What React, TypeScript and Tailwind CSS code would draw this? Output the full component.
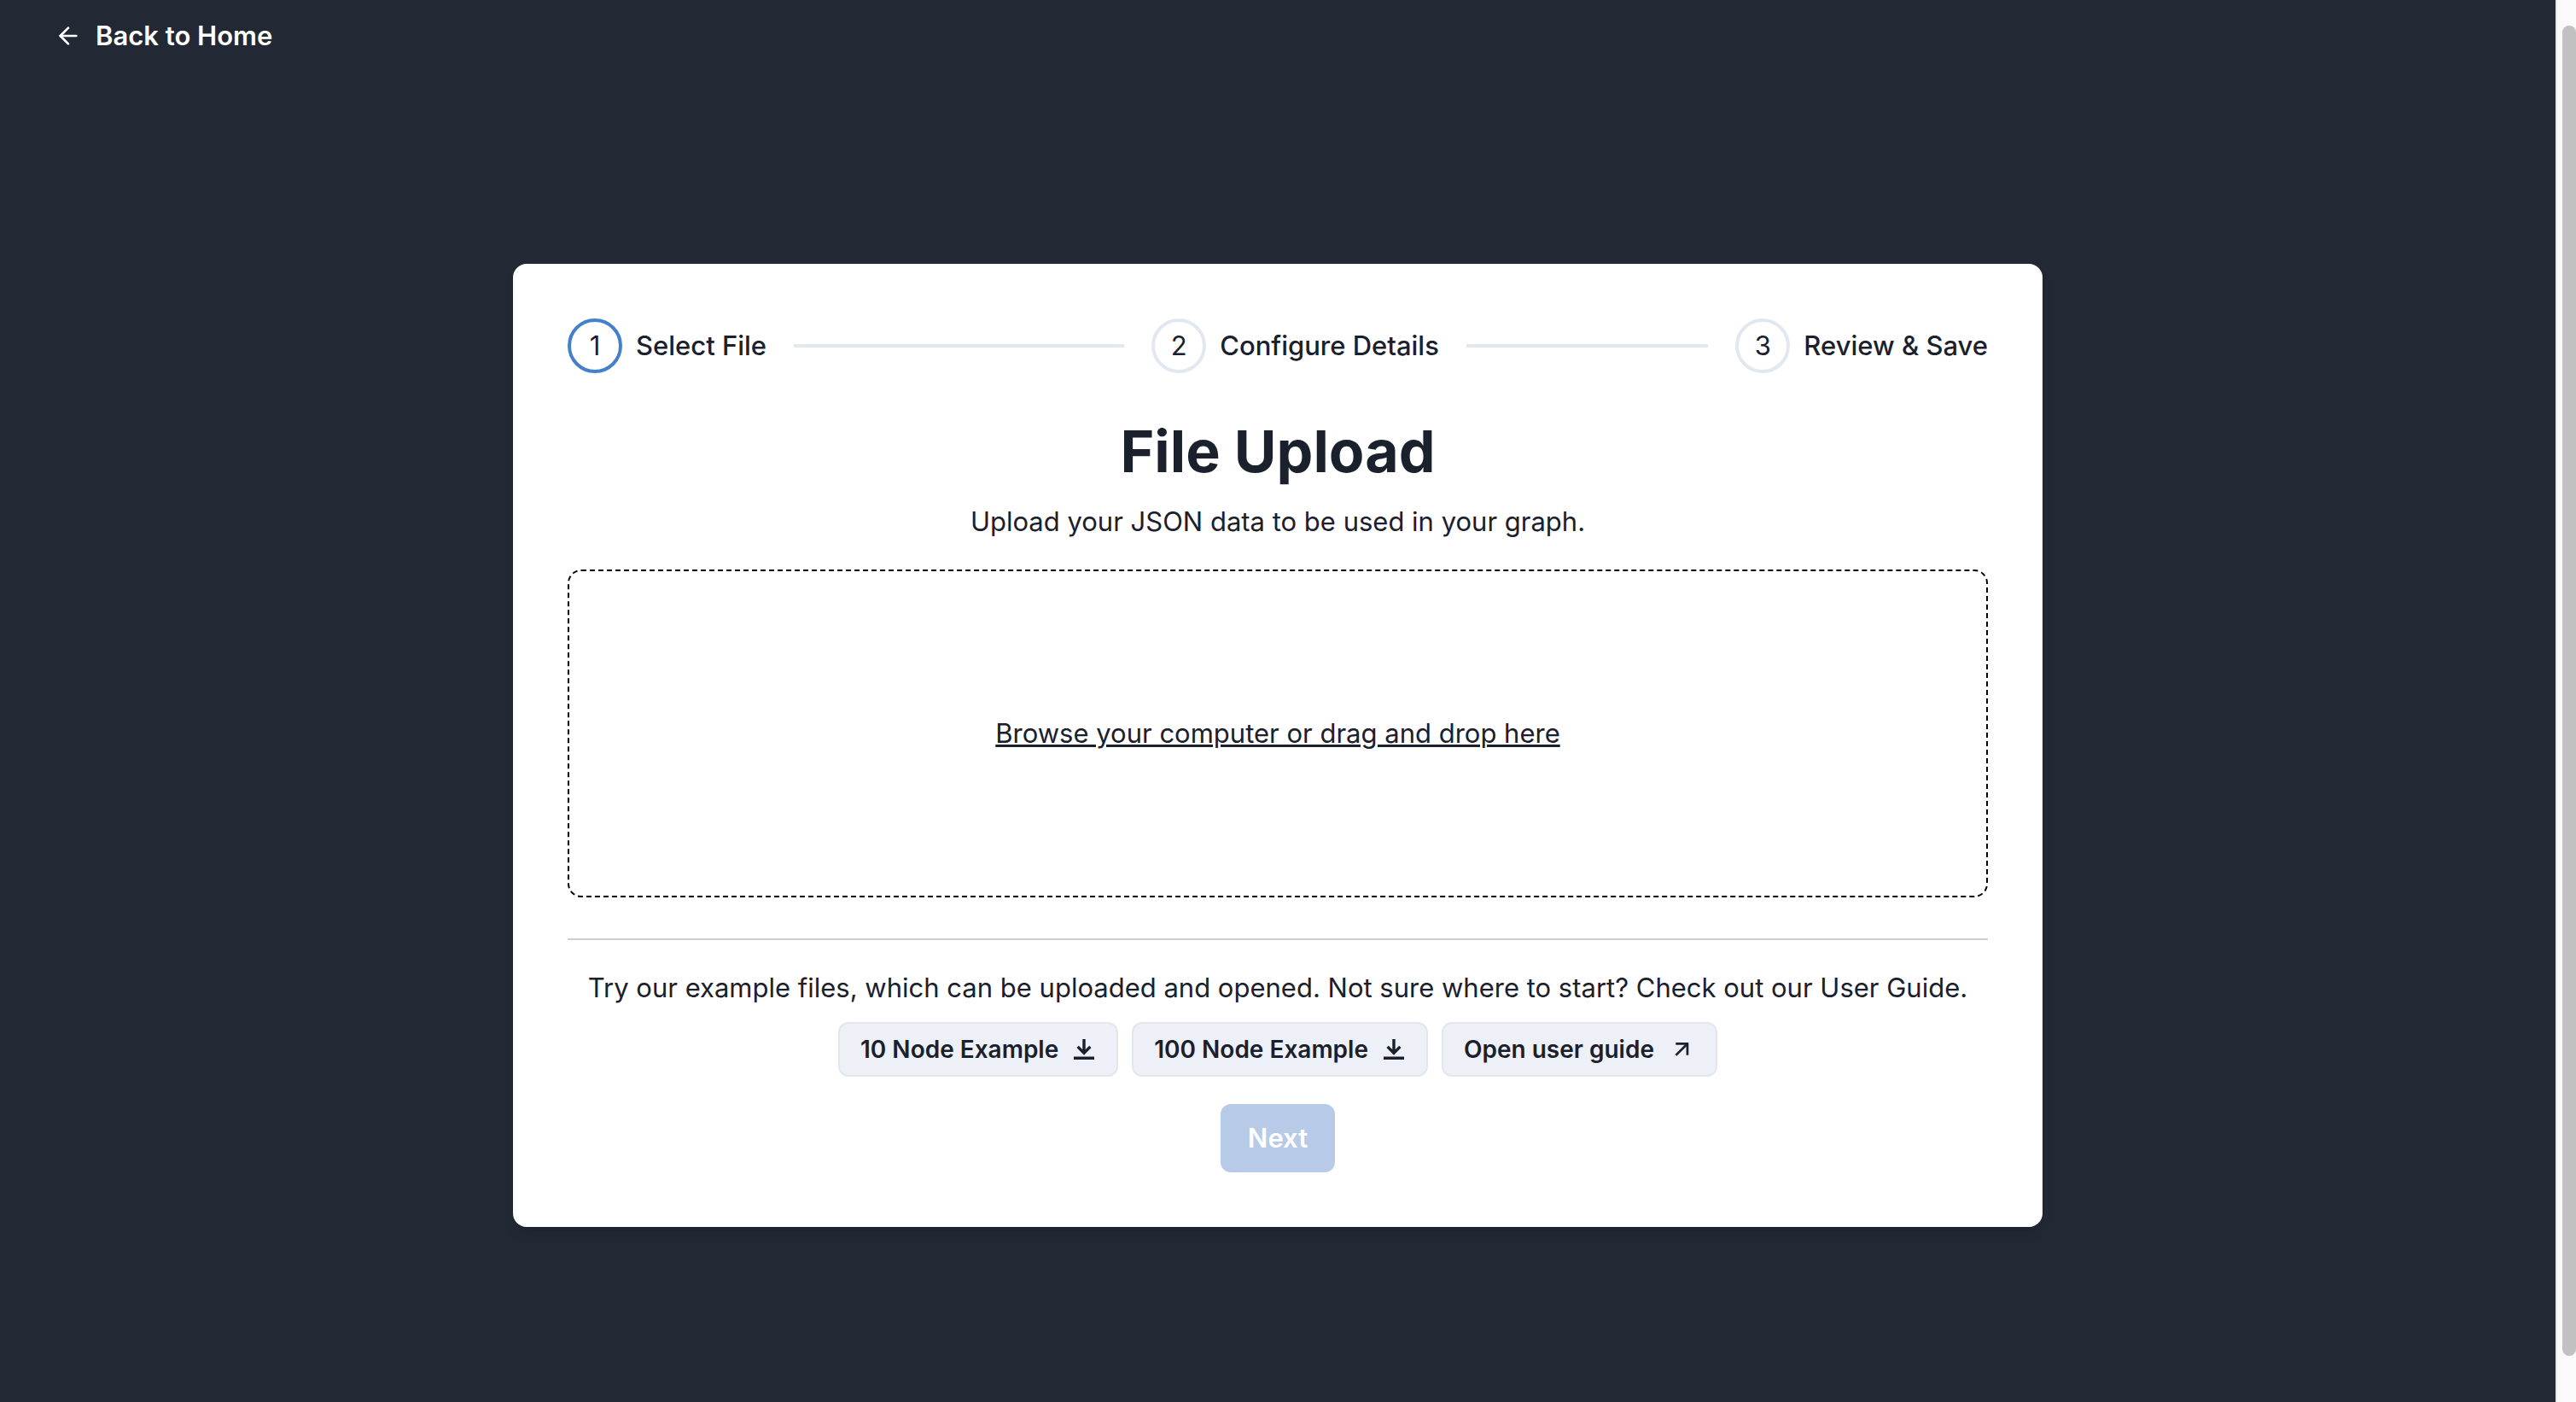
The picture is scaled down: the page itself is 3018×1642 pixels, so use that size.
import { ArrowLeft } from "lucide-react";

const steps = ["Select File", "Configure Details", "Review & Save"];

function DownloadIcon() {
  return (
    <svg viewBox="0 0 14 14" className="size-7" fill="currentColor" aria-hidden="true">
      <path d="M11.2857,6.05714 L10.08571,4.85714 L7.85714,7.14786 L7.85714,1 L6.14286,1 L6.14286,7.14786 L3.91429,4.85714 L2.71429,6.05714 L7,10.42857 L11.2857,6.05714 Z M1,11.2857 L1,13 L13,13 L13,11.2857 L1,11.2857 Z" />
    </svg>
  );
}

function OpenIcon() {
  return (
    <svg viewBox="0 0 32 32" className="size-8" fill="none" stroke="currentColor" strokeWidth="2.7" aria-hidden="true">
      <path d="M9.3 9.35H22.95V22.8" />
      <path d="M22.6 9.7L9.4 22.9" />
    </svg>
  );
}

const exampleButton =
  "flex h-16 items-center gap-4 rounded-xl border-2 border-[#e2e7ee] bg-[#edf0f6] px-6 text-[28px] leading-8 font-semibold whitespace-nowrap";

export default function App() {
  return (
    <div className="flex h-screen bg-[#222935] font-['Inter',sans-serif] text-[#1a202c]">
      <div className="flex min-w-0 flex-1 flex-col">
        <header className="px-16 pt-5 pb-10 text-white">
          <a href="#home" className="flex w-fit items-center gap-4 text-[31px] leading-11 font-semibold">
            <ArrowLeft className="size-8" aria-hidden="true" />
            Back to Home
          </a>
        </header>
        <main className="flex flex-1 items-center justify-center">
          <section className="w-full max-w-[1792px] rounded-2xl bg-white p-16 shadow-lg">
            <ol className="flex items-center gap-8 text-[31px] leading-12">
              {steps.map((label, i) => (
                <li key={label} className="flex flex-1 items-center gap-4 last:flex-none">
                  <span
                    className={
                      i === 0
                        ? "flex size-16 items-center justify-center rounded-full border-4 border-[#4580cb]"
                        : "flex size-16 items-center justify-center rounded-full border-4 border-[#e2e8f0]"
                    }
                  >
                    {i + 1}
                  </span>
                  <span className="font-medium whitespace-nowrap">{label}</span>
                  {i < steps.length - 1 && <span aria-hidden="true" className="ml-4 h-1 flex-1 bg-[#e2e7ee]" />}
                </li>
              ))}
            </ol>
            <h1 className="mt-12 text-center text-[68px] leading-[86px] font-bold">File Upload</h1>
            <p className="mt-4 text-center text-[31px] leading-12">Upload your JSON data to be used in your graph.</p>
            <label
              htmlFor="graph-file"
              className="mt-8 flex h-96 cursor-pointer items-center justify-center rounded-2xl border-2 border-dashed border-black text-[31px] leading-12 underline decoration-[3px]"
            >
              Browse your computer or drag and drop here
              <input id="graph-file" type="file" accept=".json" className="sr-only" />
            </label>
            <hr className="mt-12 border-t-2 border-[#cbcfda]" />
            <p className="mt-8 text-center text-[31px] leading-12">
              Try our example files, which can be uploaded and opened. Not sure where to start? Check out our User Guide.
            </p>
            <div className="mt-4 flex justify-center gap-4">
              <button type="button" className={exampleButton}>
                10 Node Example
                <DownloadIcon />
              </button>
              <button type="button" className={exampleButton}>
                100 Node Example
                <DownloadIcon />
              </button>
              <button type="button" className={exampleButton}>
                Open user guide
                <OpenIcon />
              </button>
            </div>
            <div className="mt-8 flex justify-center">
              <button type="button" disabled className="h-20 rounded-xl bg-[#b7cbe9] px-8 text-[31px] font-semibold text-white">
                Next
              </button>
            </div>
          </section>
        </main>
      </div>
      <div aria-hidden="true" className="flex w-6 border-l-2 border-[#ebe7e6] bg-[#fafafa] pt-[30px] pb-[54px] pl-1.5">
        <div className="flex-1 rounded-full bg-[#c1c1c1]" />
      </div>
    </div>
  );
}
